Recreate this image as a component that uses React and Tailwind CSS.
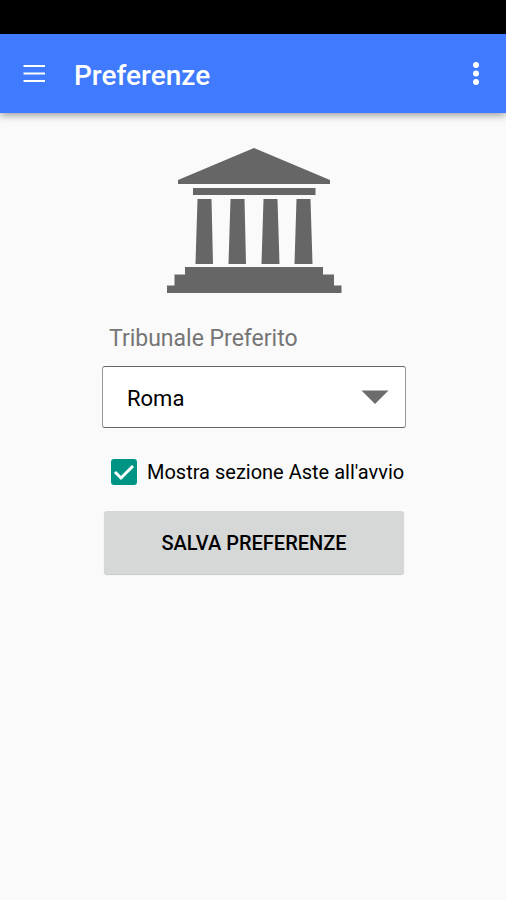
import React, { useState } from "react";

function TempleIcon() {
  return (
    <svg className="w-[176px] h-[146px]" viewBox="0 0 176 146" fill="#666666" aria-hidden="true">
      <path d="M88 0L164 32V36H12V32Z" />
      <path d="M27 40H149.500V47H27Z" />
      <path d="M31.500 51H45.500L47 116H29.500Z" />
      <path d="M64.500 51H78.500L80 116H62.500Z" />
      <path d="M97.500 51H111.500L113.500 116H95.500Z" />
      <path d="M130.500 51H144.500L146.500 116H128.500Z" />
      <path d="M19 119H157V126.500H168V137.500H175.500V145H1V137.500H8.500V126.500H19Z" />
    </svg>
  );
}

function AppBar() {
  return (
    <header className="flex h-[79px] items-center bg-[#3f7aff] pl-[22px] pr-4 text-white shadow-[0_2px_8px_rgba(0,0,0,0.4)]">
      <button type="button" aria-label="Menu" className="h-6 w-6">
        <svg className="h-6 w-6" viewBox="0 0 24 24" stroke="currentColor" strokeWidth="2" fill="none">
          <path d="M1.500 4H23M1.500 11.500H23M1.500 19H23" />
        </svg>
      </button>
      <h1 className="ml-7 flex-1 pt-1 text-[28px] leading-8 font-medium">Preferenze</h1>
      <button type="button" aria-label="Altre opzioni" className="flex h-7 w-7 justify-center">
        <svg className="h-7 w-7" viewBox="0 0 28 28" fill="currentColor">
          <circle cx="14" cy="5" r="3" />
          <circle cx="14" cy="13.500" r="3" />
          <circle cx="14" cy="22" r="3" />
        </svg>
      </button>
    </header>
  );
}

export default function App() {
  const [court, setCourt] = useState("Roma");
  const [show, setShow] = useState(true);

  return (
    <div className="min-h-screen bg-[#fafafa] font-[Roboto,sans-serif] text-black">
      <div className="h-[34px] bg-black" />
      <AppBar />
      <main className="flex flex-col items-center pt-[35px] pr-6 pl-[26px]">
        <TempleIcon />
        <form className="mt-7 flex w-full max-w-[304px] flex-col" onSubmit={(e) => e.preventDefault()}>
          <label htmlFor="court" className="ml-[7px] pt-px text-[23px] leading-8 text-[#757575]">
            Tribunale Preferito
          </label>
          <div className="mt-[11px] grid items-center">
            <select
              id="court"
              value={court}
              onChange={(e) => setCourt(e.target.value)}
              className="col-start-1 row-start-1 h-[62px] w-full appearance-none rounded-[3px] border border-x-[#999999] border-y-[#666666] bg-white px-6 pt-[2px] text-[22px]"
            >
              <option>Roma</option>
              <option>Milano</option>
              <option>Napoli</option>
            </select>
            <svg
              className="pointer-events-none col-start-1 row-start-1 mr-[17px] h-[14px] w-7 justify-self-end"
              viewBox="0 0 28 14"
              fill="#6c6c6c"
              aria-hidden="true"
            >
              <path d="M0.500 0.500H27.500L14 14Z" />
            </svg>
          </div>
          <label className="mt-7 ml-[9px] flex items-center gap-[10px] text-[20px] leading-8 whitespace-nowrap">
            <span className="grid h-[26px] w-[26px] shrink-0">
              <input
                type="checkbox"
                checked={show}
                onChange={(e) => setShow(e.target.checked)}
                className="peer col-start-1 row-start-1 h-[26px] w-[26px] appearance-none rounded-[3px] border-2 border-[#009485] checked:bg-[#009485]"
              />
              <svg
                className="pointer-events-none invisible col-start-1 row-start-1 h-[26px] w-[26px] peer-checked:visible"
                viewBox="0 0 26 26"
                fill="none"
                stroke="white"
                strokeWidth="3"
                aria-hidden="true"
              >
                <path d="M4 13L10 19L22 7" />
              </svg>
            </span>
            Mostra sezione Aste all'avvio
          </label>
          <button
            type="submit"
            className="mx-[2px] mt-[23px] h-[63px] rounded-[3px] bg-[#d6d7d7] text-[20px] font-medium shadow-[0_1px_1px_rgba(0,0,0,0.2)]"
          >
            SALVA PREFERENZE
          </button>
        </form>
      </main>
    </div>
  );
}
